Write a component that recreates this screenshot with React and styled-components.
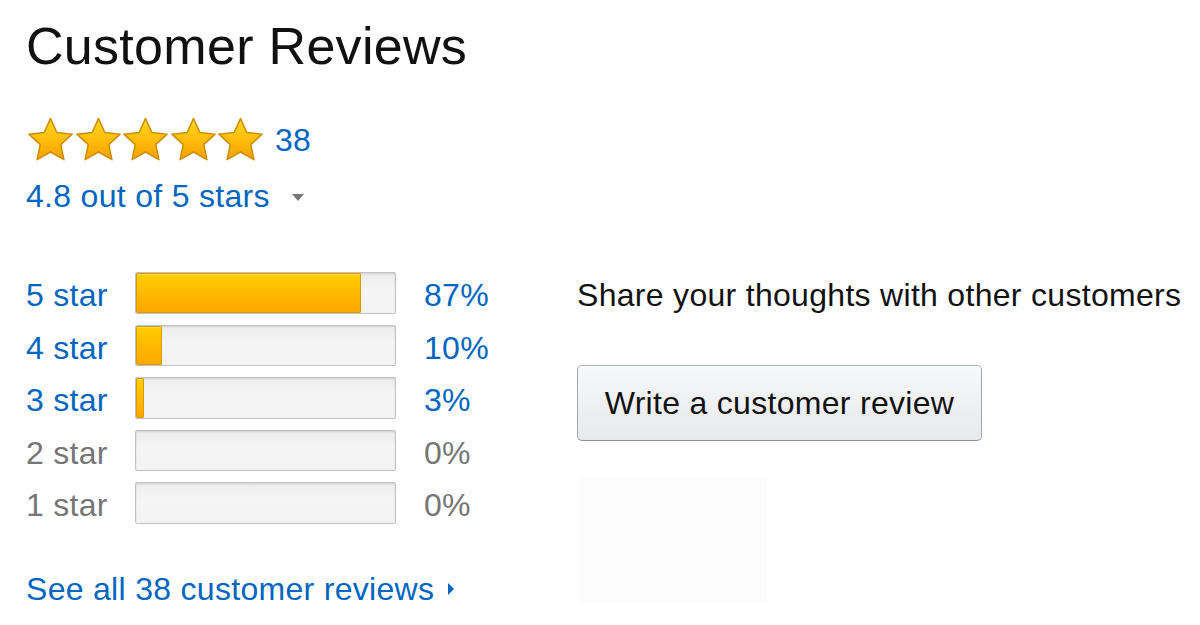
import React, { useId } from "react";
import styled, { createGlobalStyle } from "styled-components";

const Global = createGlobalStyle`
  html, body { margin: 0; padding: 0; background: #fff; }
  body { font-family: "Liberation Sans", Arial, Helvetica, sans-serif; }
  * { box-sizing: border-box; }
`;

const Page = styled.div`
  width: 1200px;
  height: 625px;
  overflow: hidden;
  padding: 16px 0 0 26px;
  color: #111;
  letter-spacing: 0.3px;
`;

const Heading = styled.h2`
  margin: 0;
  font-size: 52px;
  line-height: 60px;
  font-weight: 400;
  color: #111;
`;

const StarsRow = styled.div`
  display: flex;
  align-items: center;
  margin-top: 41px;
  height: 44px;
  padding-left: 1px;
`;

const Stars = styled.div`
  display: flex;
  gap: 0.5px;
`;

const Link = styled.a`
  color: #0066c0;
  text-decoration: none;
  font-size: 32px;
  line-height: 32px;
  cursor: pointer;
`;

const Count = styled(Link)`
  margin-left: 11px;
  padding-top: 1px;
`;

const AverageRow = styled.div`
  display: flex;
  align-items: center;
  margin-top: 19px;
  height: 32px;
`;

const Caret = styled.span`
  display: inline-block;
  margin-left: 22px;
  margin-top: 2px;
  width: 0;
  height: 0;
  border-left: 6px solid transparent;
  border-right: 6px solid transparent;
  border-top: 7px solid #777;
`;

const Main = styled.div`
  display: flex;
  margin-top: 60px;
`;

const LeftCol = styled.div`
  width: 551px;
  display: flex;
  flex-direction: column;
`;

const Histogram = styled.div`
  display: grid;
  grid-template-columns: 109px 261px auto;
  row-gap: 10.6px;
  align-items: start;
`;

const RowLabel = styled.span`
  font-size: 32px;
  line-height: 38px;
  height: 42px;
  padding-top: 4px;
  color: ${(p) => (p.$active ? "#0066c0" : "#767676")};
  cursor: ${(p) => (p.$active ? "pointer" : "default")};
`;

const Percent = styled(RowLabel)`
  padding-left: 28px;
`;

const Track = styled.div`
  height: 41.6px;
  border: 1px solid #c2c2c2;
  border-radius: 2px;
  background: linear-gradient(#ececec, #f5f5f5 40%, #f3f3f3);
  box-shadow: inset 0 1px 2px rgba(0, 0, 0, 0.12);
  display: flex;
  overflow: hidden;
`;

const Fill = styled.div`
  height: 100%;
  border: 1px solid #d59b00;
  border-radius: 1px;
  background: linear-gradient(#ffce00, #ffb900 50%, #ffa700);
  box-shadow: inset 0 1px 0 rgba(255, 255, 255, 0.25);
  min-width: 5px;
`;

const SeeAll = styled.div`
  margin-top: 49px;
  display: flex;
  align-items: center;
  height: 32px;
`;

const RightArrow = styled.span`
  display: inline-block;
  margin-left: 14px;
  width: 0;
  height: 0;
  border-top: 6px solid transparent;
  border-bottom: 6px solid transparent;
  border-left: 6px solid #0066c0;
`;

const RightCol = styled.div`
  display: flex;
  flex-direction: column;
  align-items: flex-start;
`;

const ShareText = styled.span`
  font-size: 32px;
  line-height: 38px;
  height: 42px;
  padding-top: 4px;
  color: #111;
`;

const Button = styled.button`
  margin-top: 51px;
  width: 405px;
  height: 76px;
  font-family: inherit;
  font-size: 32px;
  letter-spacing: 0.3px;
  color: #111;
  background: linear-gradient(#f7f8fa, #e7e9ec);
  border: 1px solid #adb1b8;
  border-color: #adb1b8 #a2a6ac #8d9096;
  border-radius: 5px;
  box-shadow: inset 0 1px 0 rgba(255, 255, 255, 0.6);
  cursor: pointer;
  padding: 0;
`;

const AdSlot = styled.div`
  margin-top: 36px;
  margin-left: 3px;
  width: 187px;
  height: 126px;
  background: #fcfcfc;
`;

function Star() {
  const id = useId().replace(/:/g, "");
  return (
    <svg width="47" height="45" viewBox="0 0 47 45">
      <defs>
        <linearGradient id={id} x1="0" y1="0" x2="0" y2="1">
          <stop offset="0" stopColor="#ffd81a" />
          <stop offset="0.55" stopColor="#fdbb0c" />
          <stop offset="1" stopColor="#f3a100" />
        </linearGradient>
      </defs>
      <polygon
        points="23.5,1.6 29.85,15.46 45.1,17.2 33.77,27.54 36.9,42.6 23.5,35 10.1,42.6 13.23,27.54 1.9,17.2 17.15,15.46"
        fill={`url(#${id})`}
        stroke="#cf8f0a"
        strokeWidth="1.6"
        strokeLinejoin="round"
      />
    </svg>
  );
}

const rows = [
  { label: "5 star", pct: 87 },
  { label: "4 star", pct: 10 },
  { label: "3 star", pct: 3 },
  { label: "2 star", pct: 0 },
  { label: "1 star", pct: 0 },
];

export default function App() {
  return (
    <>
      <Global />
      <Page>
        <Heading>Customer Reviews</Heading>
        <StarsRow>
          <Stars>
            {[0, 1, 2, 3, 4].map((i) => (
              <Star key={i} />
            ))}
          </Stars>
          <Count>38</Count>
        </StarsRow>
        <AverageRow>
          <Link>4.8 out of 5 stars</Link>
          <Caret />
        </AverageRow>
        <Main>
          <LeftCol>
            <Histogram>
              {rows.map((r) => (
                <React.Fragment key={r.label}>
                  <RowLabel $active={r.pct > 0}>{r.label}</RowLabel>
                  <Track>
                    {r.pct > 0 && <Fill style={{ width: `${r.pct}%` }} />}
                  </Track>
                  <Percent $active={r.pct > 0}>{r.pct}%</Percent>
                </React.Fragment>
              ))}
            </Histogram>
            <SeeAll>
              <Link>See all 38 customer reviews</Link>
              <RightArrow />
            </SeeAll>
          </LeftCol>
          <RightCol>
            <ShareText>Share your thoughts with other customers</ShareText>
            <Button>Write a customer review</Button>
            <AdSlot />
          </RightCol>
        </Main>
      </Page>
    </>
  );
}
